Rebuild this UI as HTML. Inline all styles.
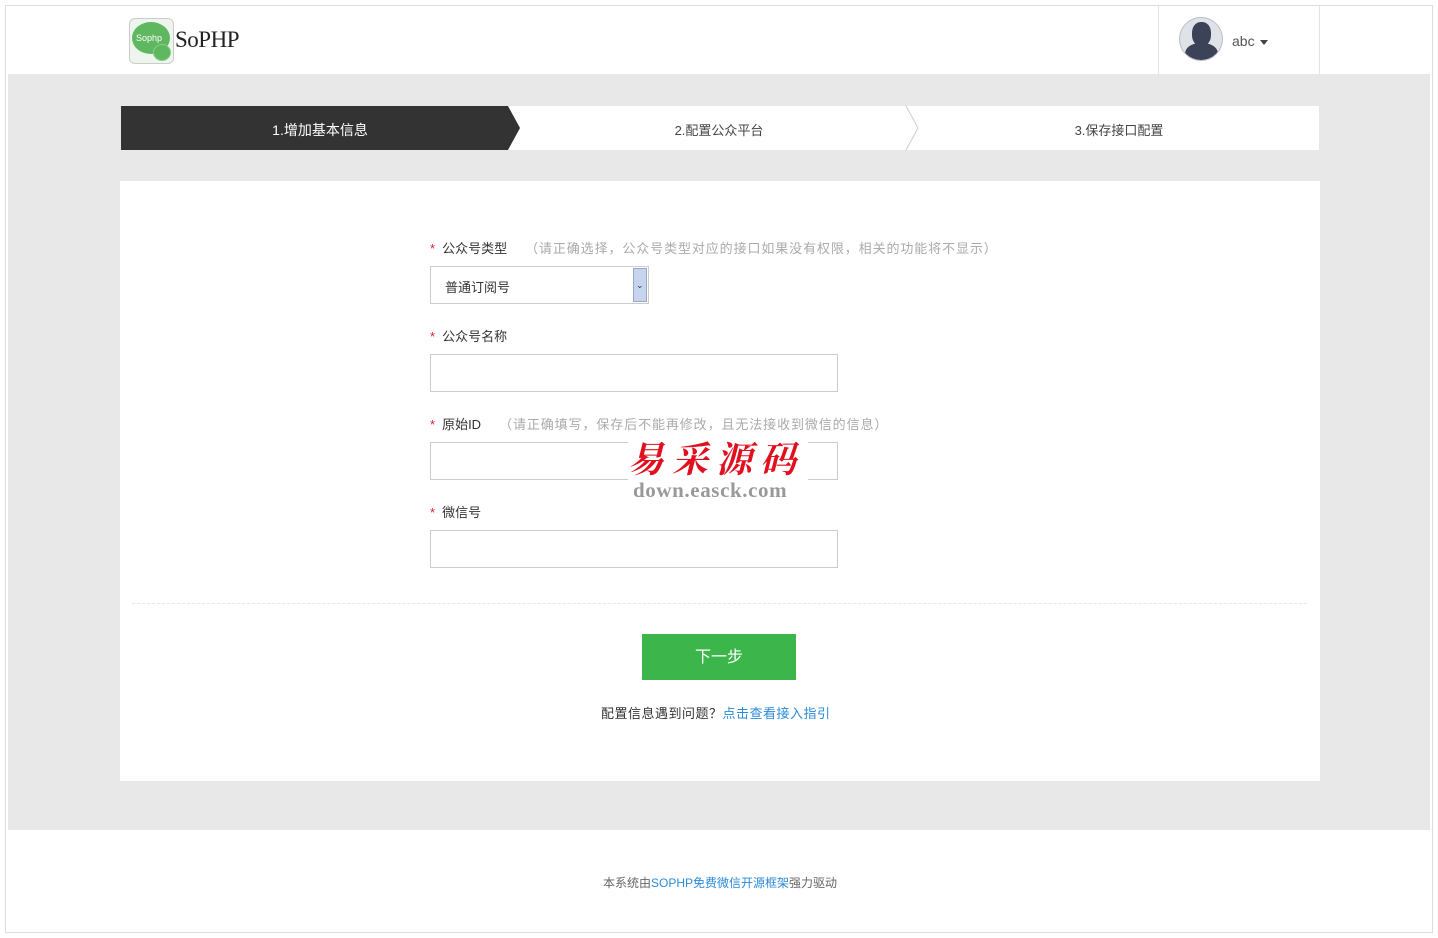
<!DOCTYPE html>
<html><head><meta charset="utf-8"><style>
*{margin:0;padding:0;box-sizing:border-box}
body{width:1438px;height:938px;background:#fff;font-family:"Liberation Sans","Noto Sans CJK SC",sans-serif;font-size:13px;color:#333;position:relative;overflow:hidden}
.frame{position:absolute;left:5px;top:5px;width:1428px;height:928px;border:1px solid #ddd;background:#fff}
.gray{position:absolute;left:8px;top:74px;width:1422px;height:756px;background:#e8e8e8}
.abs{position:absolute}
.lbl{position:absolute;left:430px;font-size:13px;color:#333}
.lbl b{color:#d9242f;font-weight:normal;margin-right:7px}
.lbl span{color:#aaa;margin-left:18px;letter-spacing:0.9px}
.inp{position:absolute;left:430px;width:408px;height:38px;border:1px solid #ccc;background:#fff}
</style></head><body>
<div class="frame"></div>
<div class="abs" style="left:129px;top:18px;width:45px;height:46px;border:1px solid #ccc;border-radius:6px;background:#eef5ee"></div>
<div class="abs" style="left:132px;top:22px;width:38px;height:32px;border-radius:50%;background:#5fb760"></div>
<div class="abs" style="left:153px;top:44px;width:18px;height:17px;border-radius:50%;background:#5fb760;border:1px solid #8c8"></div>
<div class="abs" style="left:136px;top:33px;font-size:9px;color:#fff">Sophp</div>
<div class="abs" style="left:175px;top:27px;font-family:'Liberation Serif',serif;font-size:23px;color:#222;letter-spacing:-0.5px">SoPHP</div>
<div class="abs" style="left:1158px;top:6px;width:1px;height:68px;background:#e4e4e4"></div>
<div class="abs" style="left:1319px;top:6px;width:1px;height:68px;background:#e4e4e4"></div>
<div class="abs" style="left:1179px;top:17px;width:44px;height:44px;border-radius:50%;background:#dfe3e8;border:1px solid #bbc;overflow:hidden">
<div class="abs" style="left:12px;top:4px;width:19px;height:24px;border-radius:45%;background:#3c4257"></div>
<div class="abs" style="left:5px;top:25px;width:33px;height:24px;border-radius:45% 45% 0 0;background:#3c4257"></div></div>
<div class="abs" style="left:1232px;top:33px;font-size:14px;color:#555">abc</div>
<div class="abs" style="left:1260px;top:40px;border:4px solid transparent;border-top:5px solid #444"></div>
<div class="gray"></div>
<div class="abs" style="left:121px;top:106px;width:1198px;height:44px;background:#fff"></div>
<svg class="abs" style="left:121px;top:106px" width="1198" height="44">
<polygon points="0,0 387,0 399,22 387,44 0,44" fill="#333"/>
<polyline points="785,0 797,22 785,44" fill="none" stroke="#ccc"/>
</svg>
<div class="abs" style="left:121px;top:120px;width:398px;text-align:center;color:#fff;font-size:14px">1.增加基本信息</div>
<div class="abs" style="left:520px;top:120px;width:398px;text-align:center;color:#444;font-size:13px">2.配置公众平台</div>
<div class="abs" style="left:920px;top:120px;width:398px;text-align:center;color:#444;font-size:13px">3.保存接口配置</div>
<div class="abs" style="left:120px;top:181px;width:1200px;height:600px;background:#fff"></div>
<div class="lbl" style="top:238px"><b>*</b>公众号类型<span>（请正确选择，公众号类型对应的接口如果没有权限，相关的功能将不显示）</span></div>
<div class="abs" style="left:430px;top:266px;width:219px;height:38px;border:1px solid #ccc;background:#fff;padding:10px 14px;font-size:13px">普通订阅号</div>
<div class="abs" style="left:633px;top:268px;width:14px;height:34px;background:#c7d4f0;border:1px solid #9ab"></div>
<div class="abs" style="left:636px;top:280px;font-size:9px;color:#334">&#8964;</div>
<div class="lbl" style="top:326px"><b>*</b>公众号名称</div>
<div class="inp" style="top:354px"></div>
<div class="lbl" style="top:414px"><b>*</b>原始ID<span>（请正确填写，保存后不能再修改，且无法接收到微信的信息）</span></div>
<div class="inp" style="top:442px"></div>
<div class="lbl" style="top:502px"><b>*</b>微信号</div>
<div class="inp" style="top:530px"></div>
<div class="abs" style="left:628px;top:436px;width:180px;height:66px;background:#fff"></div>
<div class="abs" style="left:628px;top:432px;font-family:'Noto Serif CJK SC',serif;font-weight:bold;font-size:36px;color:#e0101e;letter-spacing:8px;font-style:italic">易采源码</div>
<div class="abs" style="left:633px;top:478px;font-family:'Liberation Serif',serif;font-weight:bold;font-size:21px;color:#999;letter-spacing:0.6px">down.easck.com</div>
<div class="abs" style="left:132px;top:603px;width:1175px;border-top:1px dashed #e6e6e6"></div>
<div class="abs" style="left:642px;top:634px;width:154px;height:46px;background:#3cb64a;color:#fff;font-size:16px;text-align:center;line-height:48px">下一步</div>
<div class="abs" style="left:601px;top:703px;font-size:13px;color:#333;letter-spacing:0.5px">配置信息遇到问题？<span style="color:#2a8ad8">点击查看接入指引</span></div>
<div class="abs" style="left:0;top:874px;width:1438px;text-align:center;font-size:12px;color:#666;padding-left:2px">本系统由<span style="color:#2a8ad8">SOPHP免费微信开源框架</span>强力驱动</div>
</body></html>
